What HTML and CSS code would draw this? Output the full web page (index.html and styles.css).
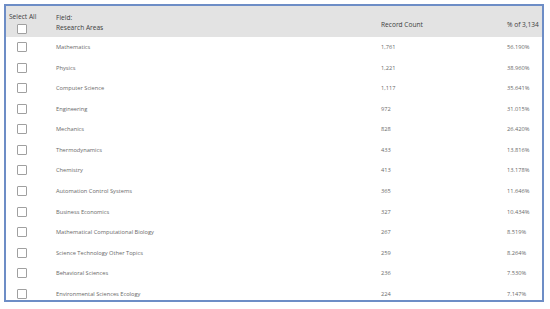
FILE: index.html
```html
<!DOCTYPE html>
<html>
<head>
<meta charset="utf-8">
<link rel="stylesheet" href="styles.css">
</head>
<body>
<div class="panel">
  <div class="head">
    <div class="c-sel">
      <div class="sel-label">Select All</div>
      <span class="box hbox"></span>
    </div>
    <div class="c-field">
      <div>Field:</div>
      <div>Research Areas</div>
    </div>
    <div class="c-count">Record Count</div>
    <div class="c-pct">% of 3,134</div>
  </div>
  <div class="rows">
    <div class="row"><div class="c-sel"><span class="box"></span></div><div class="c-field">Mathematics</div><div class="c-count">1,761</div><div class="c-pct">56.190%</div></div>
    <div class="row"><div class="c-sel"><span class="box"></span></div><div class="c-field">Physics</div><div class="c-count">1,221</div><div class="c-pct">38.960%</div></div>
    <div class="row"><div class="c-sel"><span class="box"></span></div><div class="c-field">Computer Science</div><div class="c-count">1,117</div><div class="c-pct">35.641%</div></div>
    <div class="row"><div class="c-sel"><span class="box"></span></div><div class="c-field">Engineering</div><div class="c-count">972</div><div class="c-pct">31.015%</div></div>
    <div class="row"><div class="c-sel"><span class="box"></span></div><div class="c-field">Mechanics</div><div class="c-count">828</div><div class="c-pct">26.420%</div></div>
    <div class="row"><div class="c-sel"><span class="box"></span></div><div class="c-field">Thermodynamics</div><div class="c-count">433</div><div class="c-pct">13.816%</div></div>
    <div class="row"><div class="c-sel"><span class="box"></span></div><div class="c-field">Chemistry</div><div class="c-count">413</div><div class="c-pct">13.178%</div></div>
    <div class="row"><div class="c-sel"><span class="box"></span></div><div class="c-field">Automation Control Systems</div><div class="c-count">365</div><div class="c-pct">11.646%</div></div>
    <div class="row"><div class="c-sel"><span class="box"></span></div><div class="c-field">Business Economics</div><div class="c-count">327</div><div class="c-pct">10.434%</div></div>
    <div class="row"><div class="c-sel"><span class="box"></span></div><div class="c-field">Mathematical Computational Biology</div><div class="c-count">267</div><div class="c-pct">8.519%</div></div>
    <div class="row"><div class="c-sel"><span class="box"></span></div><div class="c-field">Science Technology Other Topics</div><div class="c-count">259</div><div class="c-pct">8.264%</div></div>
    <div class="row"><div class="c-sel"><span class="box"></span></div><div class="c-field">Behavioral Sciences</div><div class="c-count">236</div><div class="c-pct">7.530%</div></div>
    <div class="row"><div class="c-sel"><span class="box"></span></div><div class="c-field">Environmental Sciences Ecology</div><div class="c-count">224</div><div class="c-pct">7.147%</div></div>
  </div>
</div>
</body>
</html>
```
FILE: styles.css
```css
html, body {
  margin: 0;
  padding: 0;
  background: #ffffff;
}
body {
  font-family: "Open Sans", "Noto Sans", sans-serif;
  color: #555;
  padding: 4px 0 0 4px;
}
.panel {
  width: 536px;
  height: 294px;
  border: 2px solid #6d8dc6;
  overflow: hidden;
  display: flex;
  flex-direction: column;
}
.head, .row {
  display: grid;
  grid-template-columns: 50px 325px 125px 1fr;
  flex-shrink: 0;
}
.head {
  background: #e3e3e3;
  height: 31px;
  font-size: 6.6px;
  color: #3d3d3d;
  align-items: end;
  box-sizing: border-box;
}
.head .c-sel {
  align-self: stretch;
  display: flex;
  flex-direction: column;
  padding: 6px 0 0 3px;
}
.sel-label {
  line-height: 9px;
  margin-bottom: 3px;
}
.head .c-field {
  line-height: 10px;
  padding-bottom: 4px;
}
.head .c-count, .head .c-pct {
  padding-bottom: 8px;
}
.rows {
  display: flex;
  flex-direction: column;
}
.row {
  height: 20.54px;
  align-items: center;
  font-size: 5.7px;
  color: #6a6a6a;
}
.box {
  display: block;
  width: 8px;
  height: 8px;
  border: 1px solid #a0a0a0;
  border-radius: 1px;
  background: #fff;
  margin-left: 11px;
}
.hbox {
  margin-left: 8px;
}
.c-pct {
  padding-left: 1px;
}
```
